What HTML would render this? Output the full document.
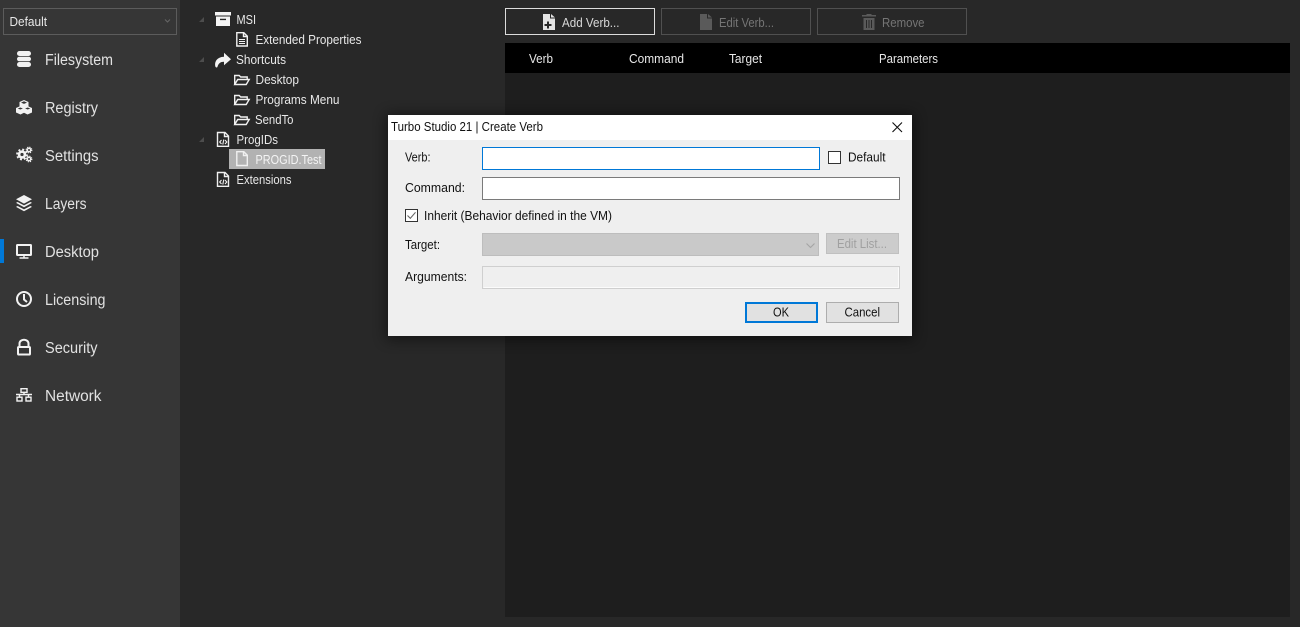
<!DOCTYPE html>
<html><head><meta charset="utf-8"><style>
html,body{margin:0;padding:0;background:#282828;width:1300px;height:627px;overflow:hidden}
svg{display:block;position:absolute;left:0;top:0}
text{font-family:"Liberation Sans",sans-serif;font-size:12.5px}
.n{font-size:15.5px;fill:#e2e2e2}
.t{fill:#e8e8e8}
.d{fill:#111}
</style></head><body>
<svg width="1300" height="627" viewBox="0 0 1300 627" xmlns="http://www.w3.org/2000/svg">
<defs><filter id="s" x="-10%" y="-20%" width="120%" height="140%"><feGaussianBlur stdDeviation="7"/></filter></defs>
<rect width="1300" height="627" fill="#282828"/>
<rect width="180" height="627" fill="#363636"/>
<rect x="505" y="73" width="785" height="544" fill="#1e1e1e"/>
<rect x="505" y="43" width="785" height="30" fill="#000"/>
<!-- sidebar -->
<rect x="3.5" y="8.5" width="173" height="26" fill="none" stroke="#5c5c5c"/>
<text x="9.5" y="26" class="t" textLength="37.5" lengthAdjust="spacingAndGlyphs">Default</text>
<path d="M165 19.5l2.5 2.5 2.5-2.5" fill="none" stroke="#666"/>
<rect x="0" y="239" width="4" height="24" fill="#0078d7"/>
<text class="n" x="45" y="65" textLength="68" lengthAdjust="spacingAndGlyphs">Filesystem</text>
<text class="n" x="45" y="113" textLength="53" lengthAdjust="spacingAndGlyphs">Registry</text>
<text class="n" x="45" y="161" textLength="53.5" lengthAdjust="spacingAndGlyphs">Settings</text>
<text class="n" x="45" y="209" textLength="41.5" lengthAdjust="spacingAndGlyphs">Layers</text>
<text class="n" x="45" y="257" textLength="54" lengthAdjust="spacingAndGlyphs">Desktop</text>
<text class="n" x="45" y="305" textLength="60.5" lengthAdjust="spacingAndGlyphs">Licensing</text>
<text class="n" x="45" y="353" textLength="52.5" lengthAdjust="spacingAndGlyphs">Security</text>
<text class="n" x="45" y="401" textLength="56.5" lengthAdjust="spacingAndGlyphs">Network</text>
<!-- sidebar icons -->
<g fill="#f2f2f2">
<rect x="17" y="51" width="14" height="5" rx="2.5"/>
<rect x="17" y="56.7" width="14" height="4.6" rx="2.3"/>
<rect x="17" y="62" width="14" height="5" rx="2.5"/>
<path d="M24 100l4.500 2v4.500l-4.500 2-4.500-2V102z"/>
<path d="M20.500 106l4 2v4.500l-4 2-4.500-2V108z"/>
<path d="M27.500 106l4.500 2v4.500l-4.500 2-4-2V108z"/>
<circle cx="22" cy="154.500" r="4.300"/>
<circle cx="29" cy="150" r="2.400"/>
<circle cx="29" cy="159" r="2.400"/>
</g>
<g fill="none" stroke="#f2f2f2">
<circle cx="22" cy="154.500" r="5" stroke-width="1.800" stroke-dasharray="2 1.930"/>
<circle cx="29" cy="150" r="2.800" stroke-width="1.200" stroke-dasharray="1.200 1"/>
<circle cx="29" cy="159" r="2.800" stroke-width="1.200" stroke-dasharray="1.200 1"/>
</g>
<circle cx="22" cy="154.500" r="1.600" fill="#363636"/>
<circle cx="29" cy="150" r="1" fill="#363636"/>
<circle cx="29" cy="159" r="1" fill="#363636"/>
<path d="M24 101.300l3 1.300-3 1.300-3-1.300zM20.300 107.500l2.600 1-2.600 1-2.600-1zM27.700 107.500l2.600 1-2.600 1-2.600-1z" fill="#363636"/>
<g fill="#f2f2f2">
<path d="M24 195l8 4.300-8 4.300-8-4.300z"/>
<path d="M17.600 202l6.400 3.400 6.400-3.400 1.600.9-8 4.300-8-4.300z"/>
<path d="M17.600 206l6.400 3.400 6.400-3.400 1.600.9-8 4.300-8-4.300z"/>
</g>
<g fill="none" stroke="#f2f2f2" stroke-width="2">
<rect x="17" y="245" width="14" height="10" rx=".5"/>
<path d="M24 255v3M19.500 258h9" stroke-width="1.500"/>
<circle cx="24" cy="299" r="7"/>
<path d="M24 294v5.500l3 2.500"/>
<rect x="18" y="347" width="12" height="7.500" rx=".8"/>
<path d="M19.500 346v-2.500a4.500 3.800 0 0 1 9 0v2.500"/>
</g>
<g fill="none" stroke="#f2f2f2" stroke-width="1.400">
<rect x="21" y="388.700" width="6" height="3.600"/>
<rect x="17" y="397.200" width="5" height="3.800"/>
<rect x="26" y="397.200" width="5" height="3.800"/>
<path d="M24 392.300v2.200M16 394.500h16M19.500 394.500v2.700M28.500 394.500v2.700"/>
</g>
<!-- tree -->
<g fill="#4d4d4d"><path d="M204 17v5h-5zM204 57v5h-5zM204 137v5h-5z"/></g>
<rect x="229" y="149" width="96" height="20" fill="#b2b2b2"/>
<text class="t" x="236.500" y="24" textLength="19.500" lengthAdjust="spacingAndGlyphs">MSI</text>
<text class="t" x="255.500" y="44" textLength="106" lengthAdjust="spacingAndGlyphs">Extended Properties</text>
<text class="t" x="236" y="64" textLength="50" lengthAdjust="spacingAndGlyphs">Shortcuts</text>
<text class="t" x="255.500" y="84" textLength="43.500" lengthAdjust="spacingAndGlyphs">Desktop</text>
<text class="t" x="255.500" y="104" textLength="84" lengthAdjust="spacingAndGlyphs">Programs Menu</text>
<text class="t" x="255" y="124" textLength="38.500" lengthAdjust="spacingAndGlyphs">SendTo</text>
<text class="t" x="236.500" y="144" textLength="41.500" lengthAdjust="spacingAndGlyphs">ProgIDs</text>
<text x="255.500" y="164" fill="#f4f4f4" textLength="66" lengthAdjust="spacingAndGlyphs">PROGID.Test</text>
<text class="t" x="236.500" y="184" textLength="55" lengthAdjust="spacingAndGlyphs">Extensions</text>
<!-- tree icons -->
<g fill="#f4f4f4">
<rect x="215" y="12" width="16" height="3.500"/>
<path d="M216 16.500h14V26h-14zM220 18.800v1.300h6v-1.300z" fill-rule="evenodd"/>
<path d="M224 51.500l7 6.500-7 6v-3.500c-3.500 0-5.500 1.500-6.500 5-.4 1-1.500 1-2 .2-1.500-5 1.500-10 8.500-10.200z" transform="translate(0 1.200)"/>
</g>
<g fill="none" stroke="#f0f0f0" stroke-width="1.400">
<path d="M236.800 32.700h7l3.500 3.500v9.800h-10.500z"/>
<path d="M243.500 33v3.500h3.500"/>
<path d="M239 39.500h6M239 41.500h6M239 43.500h6" stroke-width="1.100"/>
<path d="M217.500 132.500h7.500l3.500 3.500v10.300h-11zM224.500 133v3.500h3.500"/>
<path d="M217.500 172.500h7.500l3.500 3.500v10.300h-11zM224.500 173v3.500h3.500"/>
<path d="M221.500 140l-1.800 2 1.800 2M225 140l1.800 2-1.800 2M223.800 139.500l-1 5" stroke-width="1.100"/>
<path d="M221.500 180l-1.800 2 1.800 2M225 180l1.800 2-1.800 2M223.800 179.500l-1 5" stroke-width="1.100"/>
<path d="M236.800 151.700h7l3.500 3.500v10.300h-10.500zM243.500 152v3.500h3.500"/>
<path d="M234.700 84.500v-9h4.500l1.500 1.500h6.500v2.500M234.700 84.500h11.500l3-5h-11.500z"/>
<path d="M234.700 104.500v-9h4.500l1.500 1.500h6.500v2.500M234.700 104.500h11.500l3-5h-11.500z"/>
<path d="M234.700 124.500v-9h4.500l1.500 1.500h6.500v2.500M234.700 124.500h11.500l3-5h-11.500z"/>
</g>
<!-- toolbar -->
<rect x="505.500" y="8.500" width="149" height="26" fill="none" stroke="#dcdcdc"/>
<rect x="661.500" y="8.500" width="149" height="26" fill="none" stroke="#505050"/>
<rect x="817.500" y="8.500" width="149" height="26" fill="none" stroke="#505050"/>
<text x="562" y="27" fill="#d8d8d8" textLength="57.500" lengthAdjust="spacingAndGlyphs">Add Verb...</text>
<text x="719" y="27" fill="#757575" textLength="55" lengthAdjust="spacingAndGlyphs">Edit Verb...</text>
<text x="882" y="27" fill="#757575" textLength="42.500" lengthAdjust="spacingAndGlyphs">Remove</text>
<path d="M543 14h7v4.500h5V30h-12z" fill="#e4e4e4"/>
<path d="M551 14l4 3.500h-4z" fill="#e4e4e4"/>
<path d="M549 21.500v2.500h2.500v2H549v2.500h-2V26h-2.500v-2h2.500v-2.500z" fill="#282828"/>
<path d="M700 14h7v4.500h5V30h-12z" fill="#5a5a5a"/>
<path d="M708 14l4 3.500h-4z" fill="#5a5a5a"/>
<path d="M862 15h14v1.500h-14zM866.500 14h5v1h-5zM863.500 18h11v12h-11z" fill="#5a5a5a"/>
<path d="M866.500 20v8M869 20v8M871.500 20v8" stroke="#282828" stroke-width="1"/>
<text x="529" y="63" fill="#e8e8e8" textLength="24" lengthAdjust="spacingAndGlyphs">Verb</text>
<text x="629" y="63" fill="#e8e8e8" textLength="55" lengthAdjust="spacingAndGlyphs">Command</text>
<text x="729" y="63" fill="#e8e8e8" textLength="33" lengthAdjust="spacingAndGlyphs">Target</text>
<text x="879" y="63" fill="#e8e8e8" textLength="59" lengthAdjust="spacingAndGlyphs">Parameters</text>
<!-- dialog -->
<rect x="386" y="114" width="528" height="226" fill="#000" opacity=".45" filter="url(#s)"/>
<rect x="388" y="115" width="524" height="221" fill="#efefef"/>
<rect x="388" y="115" width="524" height="25" fill="#fff"/>
<text class="d" x="391" y="131" textLength="152" lengthAdjust="spacingAndGlyphs">Turbo Studio 21 | Create Verb</text>
<path d="M892.500 122.500l9.500 9.500M902 122.500l-9.500 9.500" stroke="#111" stroke-width="1.100" fill="none"/>
<text class="d" x="405" y="161.500" textLength="25.500" lengthAdjust="spacingAndGlyphs">Verb:</text>
<text class="d" x="405" y="192" textLength="60" lengthAdjust="spacingAndGlyphs">Command:</text>
<text class="d" x="424" y="220" textLength="188" lengthAdjust="spacingAndGlyphs">Inherit (Behavior defined in the VM)</text>
<text class="d" x="405" y="249" textLength="35" lengthAdjust="spacingAndGlyphs">Target:</text>
<text class="d" x="405" y="281" textLength="62" lengthAdjust="spacingAndGlyphs">Arguments:</text>
<text class="d" x="848" y="161.500" textLength="37.500" lengthAdjust="spacingAndGlyphs">Default</text>
<rect x="482.500" y="147.500" width="337" height="22" fill="#fff" stroke="#0078d7"/>
<rect x="482.500" y="177.500" width="417" height="22" fill="#fff" stroke="#7a7a7a"/>
<rect x="405.500" y="209.500" width="12" height="12" fill="#fff" stroke="#333"/>
<path d="M407.500 215.500l2.800 2.800 5.200-6" fill="none" stroke="#666" stroke-width="1.100"/>
<rect x="828.500" y="151.500" width="12" height="12" fill="#fff" stroke="#333"/>
<rect x="482.500" y="233.500" width="336" height="22" fill="#c9c9c9" stroke="#bdbdbd"/>
<path d="M806.500 243.500l4 4 4-4" fill="none" stroke="#a5a5a5" stroke-width="1.100"/>
<rect x="826.500" y="233.500" width="72" height="20" fill="#cccccc" stroke="#c0c0c0"/>
<text x="837" y="248" fill="#a0a0a0" textLength="50" lengthAdjust="spacingAndGlyphs">Edit List...</text>
<rect x="482.500" y="266.500" width="417" height="22" fill="#efefef" stroke="#cfcfcf"/>
<path d="M483.500 287.500h415.000v-20" fill="none" stroke="#fbfbfb"/>
<rect x="746" y="303" width="71" height="19" fill="#e1e1e1" stroke="#0078d7" stroke-width="2"/>
<text class="d" x="773" y="316.500" textLength="16" lengthAdjust="spacingAndGlyphs">OK</text>
<rect x="826.500" y="302.500" width="72" height="20" fill="#e1e1e1" stroke="#adadad"/>
<text class="d" x="844.500" y="316.500" textLength="35.500" lengthAdjust="spacingAndGlyphs">Cancel</text>
</svg>
</body></html>
